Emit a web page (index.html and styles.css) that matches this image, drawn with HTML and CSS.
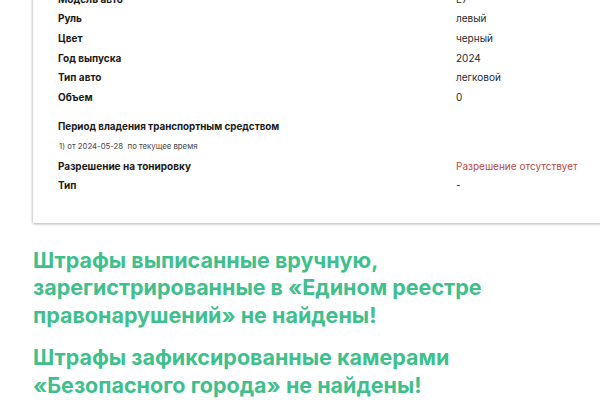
FILE: index.html
```html
<!DOCTYPE html>
<html lang="ru">
<head>
<meta charset="utf-8">
<link rel="stylesheet" href="styles.css">
</head>
<body>
<div class="page">
  <div class="card">
    <div class="rows">
      <div class="row"><span class="label">Модель авто</span><span class="value">E7</span></div>
      <div class="row"><span class="label">Руль</span><span class="value">левый</span></div>
      <div class="row"><span class="label">Цвет</span><span class="value">черный</span></div>
      <div class="row"><span class="label">Год выпуска</span><span class="value">2024</span></div>
      <div class="row"><span class="label">Тип авто</span><span class="value">легковой</span></div>
      <div class="row"><span class="label">Объем</span><span class="value">0</span></div>
    </div>
    <div class="period">
      <div class="period-title">Период владения транспортным средством</div>
      <div class="period-item">1) от 2024-05-28&nbsp; по текущее время</div>
    </div>
    <div class="rows">
      <div class="row"><span class="label">Разрешение на тонировку</span><span class="value red">Разрешение отсутствует</span></div>
      <div class="row"><span class="label">Тип</span><span class="value">-</span></div>
    </div>
  </div>
  <h2 class="notice">Штрафы выписанные вручную, зарегистрированные в «Едином реестре правонарушений» не найдены!</h2>
  <h2 class="notice">Штрафы зафиксированные камерами «Безопасного города» не найдены!</h2>
</div>
</body>
</html>
```
FILE: styles.css
```css
html, body {
  margin: 0;
  padding: 0;
  background: #ffffff;
}
body {
  font-family: Inter, "Noto Sans", "Liberation Sans", sans-serif;
  color: #1b1b1b;
  overflow: hidden;
}
.page {
  padding-left: 33px;
}
.card {
  margin-top: -11px;
  width: 620px;
  background: #fff;
  box-shadow: 0 1px 3px rgba(0,0,0,0.28), -1px 0 2px rgba(0,0,0,0.08);
  padding: 0 0 28px 25px;
  box-sizing: border-box;
}
.rows {
  display: flex;
  flex-direction: column;
}
.row {
  display: grid;
  grid-template-columns: 398px 1fr;
  height: 19.6px;
  align-items: center;
  font-size: 10px;
  line-height: 12px;
}
.label {
  font-weight: 700;
  color: #1a1a1a;
}
.value {
  font-weight: 400;
  color: #2a2a2a;
}
.value.red {
  color: #c0473e;
}
.period {
  padding-top: 10px;
}
.period-title {
  height: 19.6px;
  display: flex;
  align-items: center;
  font-size: 9.8px;
  font-weight: 700;
  color: #1a1a1a;
}
.period-item {
  height: 19.6px;
  display: flex;
  align-items: center;
  font-size: 7.8px;
  color: #444;
  padding-left: 1px;
}
.notice {
  margin: 0;
  width: 500px;
  font-size: 21.5px;
  line-height: 27.5px;
  font-weight: 700;
  color: #3fbf8b;
}
.notice:first-of-type {
  margin-top: 24px;
}
.notice + .notice {
  margin-top: 15px;
}
```
